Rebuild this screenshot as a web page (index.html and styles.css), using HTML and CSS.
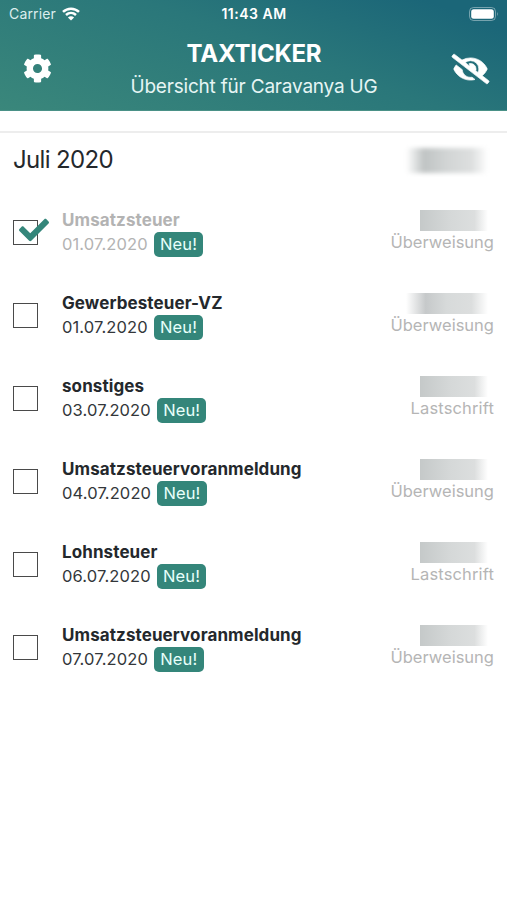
FILE: index.html
```html
<!DOCTYPE html>
<html lang="de">
<head>
<meta charset="utf-8">
<title>Taxticker</title>
<link rel="stylesheet" href="styles.css">
</head>
<body>
<header class="top">
  <div class="status">
    <div class="carrier"><span>Carrier</span>
      <svg class="wifi" viewBox="0 0 18 14" fill="none" stroke="#fff" stroke-width="2.5"><path d="M1 4.9C5.5.6 12.500.6 17 4.900M4 8C6.900 5.300 11.100 5.300 14 8"/><path d="M9 13.600L5.900 10.400C7.600 8.900 10.400 8.900 12.100 10.400Z" fill="#fff" stroke="none"/></svg>
    </div>
    <div class="clock">11:43 AM</div>
    <div class="power"><svg class="battery" viewBox="0 0 30 14"><rect x=".5" y=".5" width="26" height="13" rx="4" fill="none" stroke="#fff" stroke-opacity=".4"/><rect x="2.200" y="2.200" width="22.600" height="9.600" rx="2.500" fill="#fff"/><path d="M28 4.800q1.600 2.200 0 4.400z" fill="#fff" fill-opacity=".45"/></svg></div>
  </div>
  <div class="bar">
    <svg class="cog" viewBox="0 0 512 512" fill="#fff"><path d="M487.4 315.7l-42.6-24.6c4.3-23.2 4.3-47 0-70.2l42.6-24.6c4.9-2.8 7.1-8.6 5.5-14-11.1-35.6-30-67.8-54.7-94.6-3.8-4.1-10-5.1-14.8-2.3L380.8 110c-17.9-15.4-38.5-27.3-60.8-35.1V25.8c0-5.6-3.9-10.5-9.4-11.7-36.7-8.2-74.3-7.8-109.2 0-5.5 1.2-9.4 6.1-9.4 11.7V75c-22.2 7.9-42.8 19.8-60.8 35.1L88.7 85.5c-4.9-2.8-11-1.9-14.8 2.3-24.7 26.7-43.6 58.9-54.7 94.6-1.7 5.4.6 11.2 5.5 14L67.3 221c-4.3 23.2-4.3 47 0 70.2l-42.6 24.6c-4.9 2.8-7.1 8.6-5.5 14 11.1 35.6 30 67.8 54.7 94.6 3.8 4.1 10 5.1 14.8 2.3l42.6-24.6c17.9 15.4 38.5 27.3 60.8 35.1v49.2c0 5.6 3.9 10.5 9.4 11.7 36.7 8.2 74.3 7.8 109.2 0 5.5-1.2 9.4-6.1 9.4-11.7v-49.2c22.2-7.9 42.8-19.8 60.8-35.1l42.6 24.6c4.9 2.8 11 1.900 14.800-2.300 24.700-26.700 43.600-58.900 54.700-94.600 1.500-5.500-.7-11.300-5.600-14.100zM256 336c-44.100 0-80-35.900-80-80s35.900-80 80-80 80 35.900 80 80-35.900 80-80 80z"/></svg>
    <div class="heading"><h1>TAXTICKER</h1><p>Übersicht für Caravanya UG</p></div>
    <svg class="eye" viewBox="0 0 640 512" fill="#fff" stroke="#fff" stroke-width="12"><path d="M320 400c-75.85 0-137.25-58.71-142.9-133.11L72.2 185.82c-13.79 17.3-26.48 35.59-36.72 55.59a32.35 32.35 0 0 0 0 29.19C89.71 376.41 197.07 448 320 448c26.91 0 52.87-4 77.89-10.46L346 397.39a144.13 144.13 0 0 1-26 2.61zm313.82 58.1l-110.55-85.44a331.25 331.25 0 0 0 81.25-102.07 32.35 32.35 0 0 0 0-29.19C550.29 135.59 442.93 64 320 64a308.15 308.15 0 0 0-147.32 37.7L45.46 3.37A16 16 0 0 0 23 6.18L3.37 31.45A16 16 0 0 0 6.18 53.9l588.36 454.73a16 16 0 0 0 22.46-2.81l19.64-25.27a16 16 0 0 0-2.82-22.45zm-183.72-142l-39.3-30.38A94.75 94.75 0 0 0 416 256a94.76 94.76 0 0 0-121.31-92.21A47.65 47.65 0 0 1 304 192a46.64 46.64 0 0 1-1.54 10l-73.61-56.89A142.31 142.31 0 0 1 320 112a143.92 143.92 0 0 1 144 144c0 21.63-5.29 41.79-13.9 60.11z"/></svg>
  </div>
</header>
<main>
  <section class="month"><h2>Juli 2020</h2><span class="hidden-sum total"></span></section>
  <ul class="list">
    <li class="row done">
      <span class="box"><svg class="check" viewBox="0 0 512 512" fill="#34867a"><path d="M173.898 439.404l-166.4-166.4c-9.997-9.997-9.997-26.206 0-36.204l36.203-36.204c9.997-9.998 26.207-9.998 36.204 0L192 312.69 432.095 72.596c9.997-9.997 26.207-9.997 36.204 0l36.203 36.204c9.997 9.997 9.997 26.206 0 36.204l-294.4 294.401c-9.998 9.997-26.207 9.997-36.204-.001z"/></svg></span>
      <div class="info"><strong>Umsatzsteuer</strong><div class="due"><span>01.07.2020</span><b class="tag">Neu!</b></div></div>
      <div class="pay"><span class="hidden-sum"></span><span class="way">Überweisung</span></div>
    </li>
    <li class="row">
      <span class="box"></span>
      <div class="info"><strong>Gewerbesteuer-VZ</strong><div class="due"><span>01.07.2020</span><b class="tag">Neu!</b></div></div>
      <div class="pay"><span class="hidden-sum wide"></span><span class="way">Überweisung</span></div>
    </li>
    <li class="row">
      <span class="box"></span>
      <div class="info"><strong>sonstiges</strong><div class="due"><span>03.07.2020</span><b class="tag">Neu!</b></div></div>
      <div class="pay"><span class="hidden-sum"></span><span class="way debit">Lastschrift</span></div>
    </li>
    <li class="row">
      <span class="box"></span>
      <div class="info"><strong>Umsatzsteuervoranmeldung</strong><div class="due"><span>04.07.2020</span><b class="tag">Neu!</b></div></div>
      <div class="pay"><span class="hidden-sum"></span><span class="way">Überweisung</span></div>
    </li>
    <li class="row">
      <span class="box"></span>
      <div class="info"><strong>Lohnsteuer</strong><div class="due"><span>06.07.2020</span><b class="tag">Neu!</b></div></div>
      <div class="pay"><span class="hidden-sum"></span><span class="way debit">Lastschrift</span></div>
    </li>
    <li class="row">
      <span class="box"></span>
      <div class="info"><strong>Umsatzsteuervoranmeldung</strong><div class="due"><span>07.07.2020</span><b class="tag">Neu!</b></div></div>
      <div class="pay"><span class="hidden-sum"></span><span class="way">Überweisung</span></div>
    </li>
  </ul>
</main>
</body>
</html>
```
FILE: styles.css
```css
* { box-sizing: border-box; }
body { margin: 0; background: #fff; color: #24282c; font-family: Inter, "Liberation Sans", sans-serif; }
h1, h2, p, ul { margin: 0; padding: 0; font-weight: 400; }
svg { display: block; }

.top { height: 111px; color: #fff; background: linear-gradient(20deg, #3a877b 0%, #2a777a 55%, #1b6678 90%); border-bottom: 1px solid #4a9187; }
.status { height: 27px; padding: 0 8px 0 9px; display: grid; grid-template-columns: 1fr auto 1fr; align-items: center; font-size: 14px; line-height: 27px; }
.carrier { display: flex; align-items: center; gap: 6px; letter-spacing: .15px; color: #dceeee; }
.wifi { width: 18px; height: 14px; }
.clock { font-weight: 600; font-size: 14px; letter-spacing: .5px; }
.power { display: flex; justify-content: flex-end; }
.battery { width: 30px; height: 14px; }

.bar { display: grid; grid-template-columns: 37px 1fr 37px; align-items: center; height: 83px; padding: 0 18px 0 19px; }
.cog { width: 29px; height: 29px; margin-left: 4px; }
.eye { width: 37px; height: 30px; overflow: visible; }
.heading { text-align: center; padding-top: 4px; }
.heading h1 { font-size: 24px; line-height: 32px; font-weight: 650; letter-spacing: -.2px; }
.heading p { font-size: 19px; line-height: 33px; color: #e6f5f4; letter-spacing: -.2px; }

main { margin-top: 20px; border-top: 2px solid #ededed; }
.month { height: 58px; padding: 0 20px 0 13px; display: flex; justify-content: space-between; align-items: center; }
.month h2 { font-size: 24px; line-height: 53px; height: 58px; letter-spacing: -.65px; }
.list { list-style: none; }
.row { height: 83px; padding: 0 13px; display: flex; }
.box { flex: none; width: 25px; height: 25px; margin-top: 29px; border: 1px solid #4a4a4a; position: relative; }
.check { position: absolute; left: 5px; top: -6px; width: 30px; height: 30px; }
.info { margin: 18px 0 0 24px; flex: 1; }
.info strong { display: block; font-size: 17px; line-height: 23px; font-weight: 650; letter-spacing: .1px; white-space: nowrap; }
.due { display: flex; align-items: center; gap: 6px; font-size: 16.5px; line-height: 25px; height: 25px; letter-spacing: .12px; color: #33373a; }
.tag { font-weight: 400; color: #e8fffb; background: #34867a; border-radius: 5px; padding: 0 6.3px; line-height: 25px; }
.pay { margin-top: 18px; display: flex; flex-direction: column; align-items: flex-end; color: #b5b5b5; font-size: 16.5px; }
.way { line-height: 22px; }
.debit { letter-spacing: .15px; }
.hidden-sum { width: 68px; height: 21px; margin: 1px 6px 0 0; background: linear-gradient(90deg, #c5c9c9, #d5d8d8 45%, #dcdede 80%, #fff); }
.hidden-sum.wide { width: 82px; background: linear-gradient(90deg, #fff, #c6c9ca 24%, #d7dada 50%, #dcdede 80%, #fff); }
.hidden-sum.total { width: 82px; height: 25px; margin: 0 -1px 4px 0; filter: blur(2px); background: linear-gradient(90deg, #fff, #c0c4c4 22%, #d2d5d5 50%, #dddfdf 80%, #fff); }
.done .info strong, .done .due > span { color: #b3b3b3; }
```
